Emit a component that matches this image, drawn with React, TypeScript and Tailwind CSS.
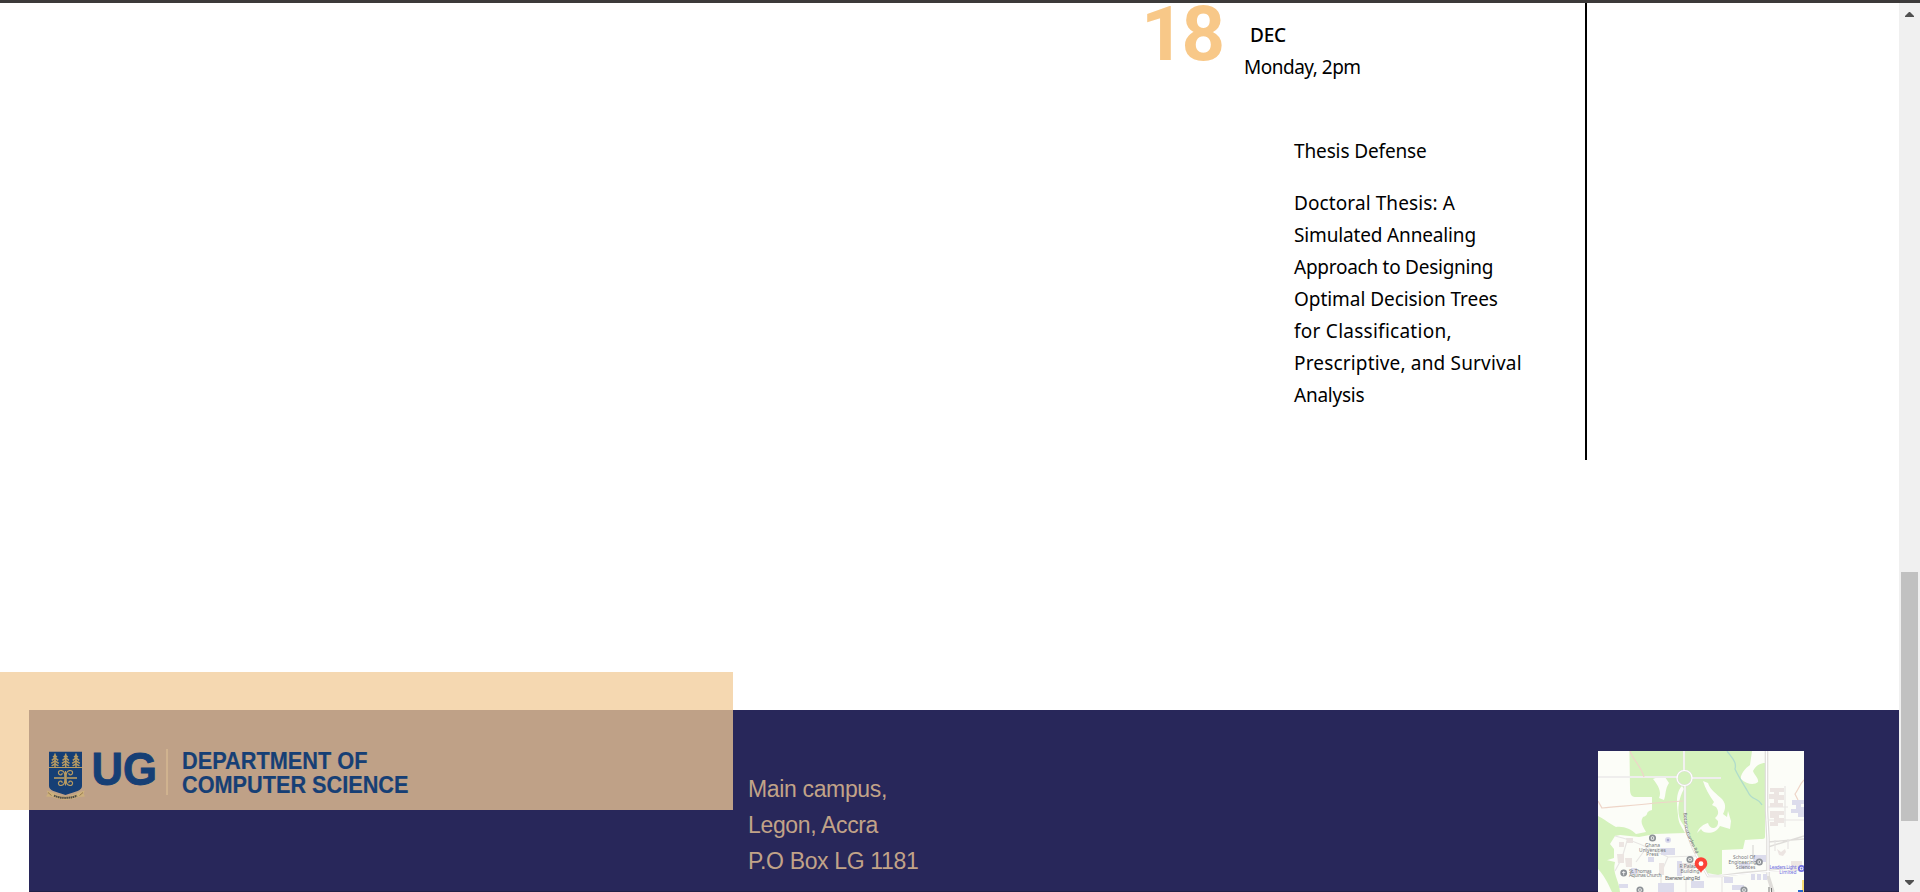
import React from "react";

const abstractLines = [
  { text: "Doctoral Thesis: A", tracking: "tracking-[0.1px]" },
  { text: "Simulated Annealing", tracking: "tracking-[-0.15px]" },
  { text: "Approach to Designing", tracking: "tracking-[-0.26px]" },
  { text: "Optimal Decision Trees", tracking: "tracking-[-0.05px]" },
  { text: "for Classification,", tracking: "tracking-[0.26px]" },
  { text: "Prescriptive, and Survival", tracking: "tracking-[0.17px]" },
  { text: "Analysis", tracking: "tracking-[-0.23px]" },
];

function Tree({ x }: { x: number }) {
  return (
    <g transform={`translate(${x} 13)`} stroke="#b89b62" fill="none">
      <path d="M0 0.5V14.5" strokeWidth="1.5" />
      <path
        d="M-2 4.2L0 2.6L2 4.2M-3.2 7.4L0 5L3.2 7.4M-3.8 10.4L0 7.8L3.8 10.4M-3.4 12.8L0 10.8L3.4 12.8"
        strokeWidth="1.5"
      />
    </g>
  );
}

function DepartmentLogo() {
  return (
    <svg width="400" height="65" viewBox="0 0 400 65" className="relative z-10 shrink-0">
      <path d="M9 11.7H42V46C42 50.5 36 51.5 25.5 55C15 51.5 9 50.5 9 46Z" fill="#163f75" />
      <path d="M9 27.5H42" stroke="#b89b62" strokeWidth="1" />
      <Tree x={15} />
      <Tree x={25.7} />
      <Tree x={36} />
      <g stroke="#b89b62" strokeWidth="1.2" fill="none">
        <path d="M14 38H37" strokeWidth="1.6" />
        <path d="M25.5 31V45.5" strokeWidth="1" />
        <path d="M24.8 37.2C25.5 28.5 17.5 29.5 18.5 33.3C19.3 35.8 22.7 35.2 22 33" />
        <path d="M26.2 37.2C25.5 28.5 33.5 29.5 32.5 33.3C31.7 35.8 28.3 35.2 29 33" />
        <path d="M24.8 38.8C25.5 47.5 17.5 46.5 18.5 42.7C19.3 40.2 22.7 40.8 22 43" />
        <path d="M26.2 38.8C25.5 47.5 33.5 46.5 32.5 42.7C31.7 40.2 28.3 40.8 29 43" />
      </g>
      <path
        d="M6.5 50.5L13 52.5C21 57.5 30 57.5 38 52.5L44.8 50.5L43.5 53.5L45 56.5L38.5 57C30 60.5 21 60.5 12.5 57L6 56.5L8 53.5Z"
        fill="#cdb07c"
      />
      <path d="M14 55.7C21 58.6 30 58.6 37 55.7" stroke="#4c4a45" strokeWidth="2" strokeDasharray="1.6 0.5" fill="none" />
      <path d="M8 52.5L11.5 55.5M43 52.5L39.5 55.5" stroke="#8a6f3f" strokeWidth="0.8" />
      <g fill="#163f75" stroke="#163f75" fontFamily="'Liberation Sans', Arial, sans-serif" fontWeight="700">
        <text x="51.5" y="44.6" fontSize="46" strokeWidth="0.9" textLength="65.5" lengthAdjust="spacingAndGlyphs">UG</text>
        <text x="142" y="28.8" fontSize="23.4" strokeWidth="0.2" textLength="185.5" lengthAdjust="spacingAndGlyphs">DEPARTMENT OF</text>
        <text x="142" y="52.7" fontSize="23.4" strokeWidth="0.2" textLength="226.5" lengthAdjust="spacingAndGlyphs">COMPUTER SCIENCE</text>
      </g>
      <path d="M127 9V55" stroke="#dcbf95" strokeWidth="1.2" />
    </svg>
  );
}

function Poi({ x, y, color = "#8d9297" }: { x: number; y: number; color?: string }) {
  return (
    <g>
      <circle cx={x} cy={y} r="2.7" fill="#f4f5f2" stroke={color} strokeWidth="1.7" />
      <circle cx={x} cy={y} r="0.9" fill={color} />
    </g>
  );
}

function CampusMap() {
  return (
    <svg width="206" height="141" viewBox="0 0 206 141" className="block">
      <rect width="206" height="141" fill="#fcfdf8" />
      <g fill="#d5f2bd">
        <path d="M31.5 0H154L152 14C146 18 142 25 143 28C149 34 157 34 160 31C161 27 156 24 155 20C158 14 163 12 167 12V86C167 88 165 88 162 88L147 89L145 98L124 99V123L120 124L109 122L98 102C91 87 88 77 84 72C78 64 80 48 86 38L84 35C77 42 79 55 80 64C80 72 84 76 87 82L57 83L41 86L22 84L17 85L12 93L16 98V107L0 112V65C8 69 12 73 18 76C26 75 33 78 38 83L48 81C44 74 42 71 45 66C52 64 46 61 54 59V46H37C33 46 32 42 32 38Z" />
        <path d="M0 107L17 111C14 122 21 129 22 141H14C10 132 5 123 0 118Z" />
      </g>
      <g fill="#fcfdf8">
        <path d="M55 28C58 26 64 27 67 26L71 32C67 38 68 43 66 49L61 47C64 41 60 34 55 28Z" />
        <path d="M105 30L110 32C112 39 119 43 124 48C129 54 127 59 125 63L129 66L130 60L133 70L132 78L122 75C118 83 106 84 103 78L99 82C101 76 106 73 110 72C112 80 121 78 120 70L117 67C121 64 121 60 118 56L114 54L116 51C111 44 107 37 105 30Z" />
      </g>
      <g fill="none" stroke="#dfddda" strokeWidth="2.2">
        <path d="M0 26H80M86 0V20M94 27H123" />
        <circle cx="86.5" cy="27" r="7.5" />
        <path d="M87 35V60C87 82 94 96 100 107L110 125H124L146 122L206 117" strokeWidth="2.6" />
        <path d="M17 85C38 89 51 98 70 106L98 105M29 90L24 107L17 120M49 96L38 111M70 106L63 122V141M88 126V141M124 125V141" strokeWidth="1.2" stroke="#e8e6e4" />
        <path d="M168.5 0V60L170 88V125L175 141" strokeWidth="3.6" />
        <path d="M155 94V108M170 96L206 85M170 91L206 88" strokeWidth="1.4" />
        <path d="M187 35V76M168 69H206M170 56H190M177 89V100M190 88V98" strokeWidth="1.2" stroke="#e8e6e4" />
      </g>
      <g fill="none" stroke="#ffffff" strokeWidth="1.2">
        <path d="M0 26H80M86 0V20M94 27H123M87 35V60C87 82 94 96 100 107L110 125H124L206 117M168.5 0V60L170 88V125" />
        <circle cx="86.5" cy="27" r="7.5" />
      </g>
      <g fill="none" stroke="#eed5c8" strokeWidth="1.2">
        <path d="M32 0C35 9 43 15 46 26M0 50L4 57C25 55 40 54 57 52L85 50M206 29C202 33 200 39 197 43L200 49" />
      </g>
      <path d="M129 0C134 7 139 11 137 18C140 25 146 34 150 41C154 50 160 46 164 54" fill="none" stroke="#b0dccb" strokeWidth="1.3" />
      <g fill="#ece5e2">
        <path d="M172 37H186V41H181V44H186V49H180V52H185V56H172V52H176V48H171V43H176V41H172Z" />
        <path d="M172 60H186V64H181V67H186V72H180V75H172V71H176V67H172Z" />
        <path d="M28 87H35V92H29ZM21 91H26V96H21ZM19 103H26V112H20ZM27 107H34V116H28ZM61 112H66V124H61ZM80 112H97V118H80ZM179 98L183 101L187 98L188 101L185 105L181 104ZM193 110H204V120H193Z" />
      </g>
      <g fill="#dcdcec">
        <path d="M194 49H206V53H203V56H206V66H200V62H193V58H198V54H194Z" />
        <path d="M63 97H77V104H63ZM79 110H84V125H79ZM33 117H39V123H33ZM60 132H76V141H60ZM21 133H30V137H21ZM93 130H106V137H93ZM126 126H135V132H126ZM134 134H146V139H134ZM153 123H157V129H153ZM159 123H163V129H159ZM165 123H169V129H165ZM155 104H168V111H155ZM141 112H152V118H141ZM50 106H56V111H50Z" />
        <circle cx="70" cy="89" r="3" />
      </g>
      <Poi x={54.5} y={87} />
      <circle cx="70" cy="89" r="1.3" fill="#aaaad0" />
      <Poi x={92} y={108.5} />
      <Poi x={161.3} y={111} />
      <Poi x={42} y={139} />
      <Poi x={146} y={139} />
      <Poi x={203.5} y={117.5} color="#7370e2" />
      <circle cx="25.7" cy="122" r="3.4" fill="#8d9297" />
      <path d="M25.7 120V124.3M24 121.4H27.4" stroke="#ffffff" strokeWidth="0.8" />
      <g fill="#74777b" fontFamily="'Noto Sans', sans-serif" fontSize="4.9" textAnchor="middle">
        <text x="54.5" y="95.8">Ghana</text>
        <text x="54.5" y="100.5">Universities</text>
        <text x="54.5" y="105.3">Press</text>
        <text x="31" y="121.6" textAnchor="start" textLength="22.5">St. Thomas</text>
        <text x="31" y="126.3" textAnchor="start" textLength="32.5">Aquinas Church</text>
        <text x="90" y="117">R Palao</text>
        <text x="92" y="122">Building</text>
        <text x="84.5" y="128.9" textLength="35" fill="#606266">Ebenezer Laing Rd</text>
        <text x="146" y="108">School Of</text>
        <text x="144.5" y="113">Engineering</text>
        <text x="147.5" y="117.8">Sciences</text>
        <text x="198.5" y="117.7" textAnchor="end" textLength="27" fill="#7370e2">Leaders Light</text>
        <text x="198.5" y="122.5" textAnchor="end" fill="#7370e2">Limited</text>
        <text transform="translate(85.5 62) rotate(84)" fontSize="4.6" textAnchor="start" fill="#606266">Botanical</text>
        <text transform="translate(88 82) rotate(65)" fontSize="4.6" textAnchor="start" fill="#606266">Garden Rd</text>
      </g>
      <path d="M171 141V136M173.5 141V137" stroke="#777777" strokeWidth="1" />
      <path d="M204 129H206V141H204Z" fill="#f8dc74" />
      <rect x="200" y="139" width="5" height="2" fill="#2867cc" />
      <path d="M103 122C102 118.5 96.7 117.5 96.7 112.5A6.3 6.3 0 0 1 109.3 112.5C109.3 117.5 104 118.5 103 122Z" fill="#fc4337" />
      <circle cx="103" cy="112.7" r="2.4" fill="#ffffff" />
    </svg>
  );
}

function Scrollbar() {
  return (
    <div className="flex w-[21px] shrink-0 flex-col items-center bg-[#f0f0f0]">
      <svg width="9" height="5" viewBox="0 0 9 5" className="mt-[9px] shrink-0">
        <path d="M0 5V4L4 0H5L9 4V5Z" fill="#505050" />
      </svg>
      <div className="mt-[555px] mr-[1px] h-[249px] w-[17px] shrink-0 bg-[#c1c1c1]" />
      <svg width="9" height="5" viewBox="0 0 9 5" className="mt-[59px] shrink-0">
        <path d="M0 0V1L4 5H5L9 1V0Z" fill="#505050" />
      </svg>
    </div>
  );
}

export default function App() {
  return (
    <div className="flex h-[892px] w-[1920px] flex-col bg-white text-black">
      <div className="h-[3px] shrink-0 bg-[#3c3a3a]" />
      <div className="flex min-h-0 flex-1">
        <div className="flex min-w-0 flex-1 flex-col">
          <main className="h-[707px] shrink-0">
            <section className="flex h-[457px] w-[1587px] border-r-2 border-black pl-[1141px] font-['Noto_Sans',sans-serif] text-[19px] leading-8">
              <div className="w-[103px] shrink-0 font-['Roboto',Arial,sans-serif] text-[76px] leading-[62px] font-bold tracking-[-3px] text-[#f8c888]">
                18
              </div>
              <div className="pt-[16px]">
                <p className="pl-[6px] font-medium tracking-[-0.2px]">DEC</p>
                <p className="tracking-[-0.5px]">Monday, 2pm</p>
                <div className="pt-[52px] pl-[50px] whitespace-nowrap">
                  <h3 className="mb-[20px] tracking-[-0.13px]">Thesis Defense</h3>
                  {abstractLines.map((line) => (
                    <p key={line.text} className={line.tracking}>{line.text}</p>
                  ))}
                </div>
              </div>
            </section>
          </main>
          <div className="relative h-[182px] shrink-0 pl-[29px]">
            <footer className="flex h-full border-b border-[#201f48] bg-[#28275a]">
              <div className="w-[719px] shrink-0 pt-[30px] pl-[11px]">
                <DepartmentLogo />
              </div>
              <address className="w-[850px] shrink-0 pt-[61px] font-['Liberation_Sans',Arial,sans-serif] text-[23px] leading-9 tracking-[-0.35px] text-[#c2a388] not-italic">
                <p>Main campus,</p>
                <p>Legon, Accra</p>
                <p>P.O Box LG 1181</p>
              </address>
              <div className="h-[182px] overflow-hidden pt-[41px]">
                <CampusMap />
              </div>
            </footer>
            <div className="absolute -top-[38px] left-0 h-[138px] w-[733px] bg-[#f2cb97]/75" />
          </div>
        </div>
        <Scrollbar />
      </div>
    </div>
  );
}
